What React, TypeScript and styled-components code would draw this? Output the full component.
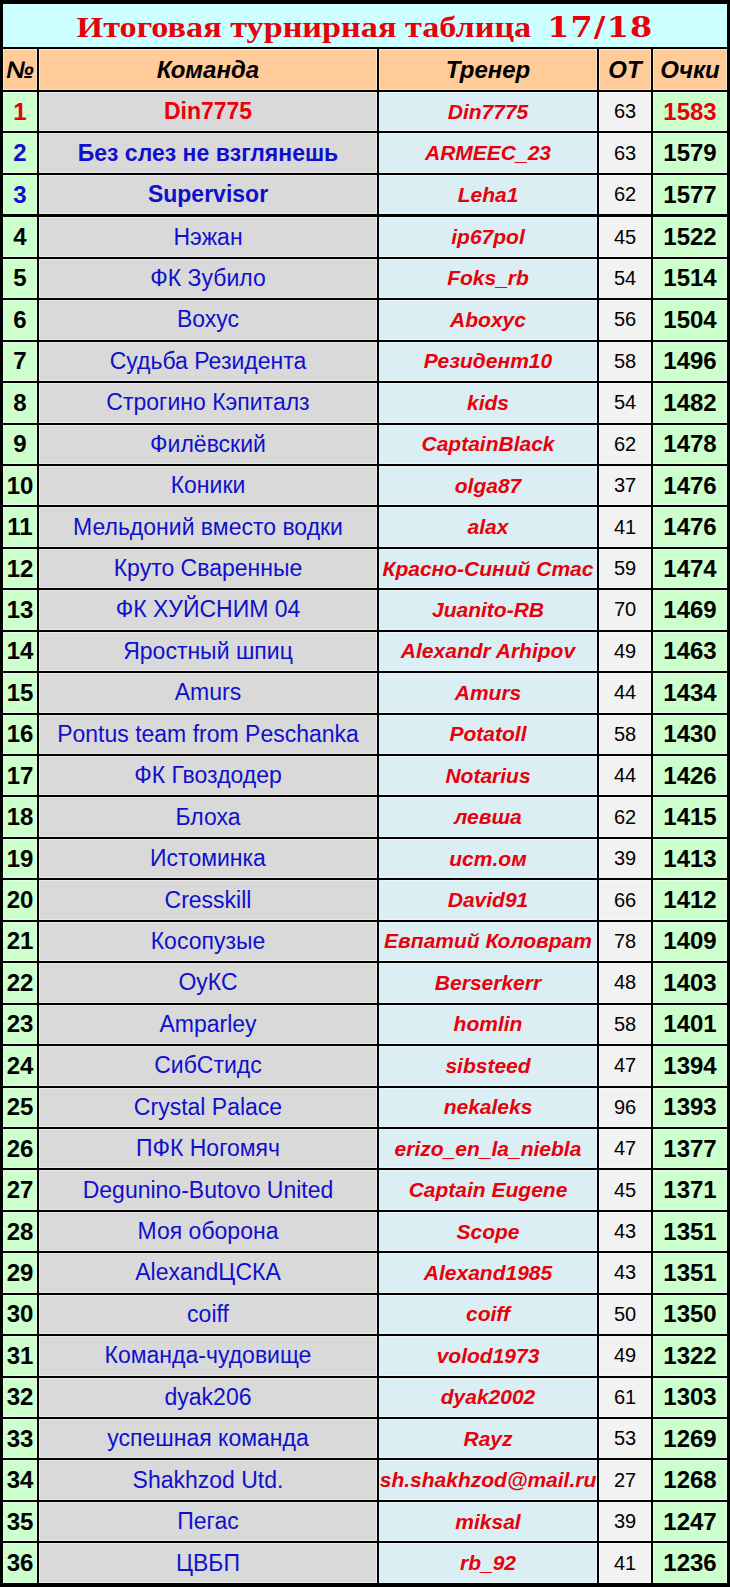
import React from 'react'
import styled, { createGlobalStyle } from 'styled-components'

const GlobalStyle = createGlobalStyle`
  html, body {
    margin: 0;
    padding: 0;
    background: #000;
  }
`

const RED = '#e8000a'
const BLUE = '#1010cc'
const COLS = '34px 338px 218px 52px 74px'

const Page = styled.div`
  width: 730px;
  height: 1587px;
  box-sizing: border-box;
  background: #000;
  padding: 4px 3px;
  display: flex;
  flex-direction: column;
  gap: 2px;
  font-family: "Liberation Sans", Arial, sans-serif;
`

const Title = styled.div`
  height: 43px;
  background: #ccffff;
  display: flex;
  align-items: center;
  justify-content: center;
  padding-top: 2px;
  box-sizing: border-box;
`

const TitleText = styled.span`
  display: inline-block;
  font-family: "Liberation Serif", "Times New Roman", serif;
  font-weight: bold;
  font-size: 30px;
  color: ${RED};
  transform: scaleX(1.14);
  white-space: nowrap;
`

const Season = styled.span`
  font-family: "DejaVu Serif", serif;
  font-weight: 900;
  font-size: 28px;
  margin-left: 14px;
  letter-spacing: 1px;
`

const Row = styled.div<{ $height: number; $gapTop?: number }>`
  display: grid;
  grid-template-columns: ${COLS};
  gap: 2px;
  height: ${({ $height }) => $height}px;
  margin-top: ${({ $gapTop }) => ($gapTop ? $gapTop + 'px' : '0')};
`

const Cell = styled.div<{ $bg: string }>`
  background: ${({ $bg }) => $bg};
  display: flex;
  align-items: center;
  justify-content: center;
  white-space: nowrap;
  overflow: hidden;
  box-shadow: inset 0 0 0 1px rgba(255, 255, 255, 0.45);
`

const HeadText = styled.span`
  font-weight: bold;
  font-style: italic;
  font-size: 24px;
  color: #000;
`

const Num = styled.span<{ $color: string }>`
  font-weight: bold;
  font-size: 24px;
  color: ${({ $color }) => $color};
`

const Team = styled.span<{ $color: string; $bold?: boolean }>`
  font-size: 23px;
  font-weight: ${({ $bold }) => ($bold ? 'bold' : 'normal')};
  color: ${({ $color }) => $color};
`

const Coach = styled.span`
  font-size: 21px;
  font-weight: bold;
  font-style: italic;
  color: ${RED};
`

const Games = styled.span`
  font-size: 20px;
  color: #000;
`

const Points = styled.span<{ $color: string }>`
  font-size: 24px;
  font-weight: bold;
  color: ${({ $color }) => $color};
`

type Entry = [string, string, number, number]

const data: Entry[] = [
  ['Din7775', 'Din7775', 63, 1583],
  ['Без слез не взглянешь', 'ARMEEC_23', 63, 1579],
  ['Supervisor', 'Leha1', 62, 1577],
  ['Нэжан', 'ip67pol', 45, 1522],
  ['ФК Зубило', 'Foks_rb', 54, 1514],
  ['Вохус', 'Aboxyc', 56, 1504],
  ['Судьба Резидента', 'Резидент10', 58, 1496],
  ['Строгино Кэпиталз', 'kids', 54, 1482],
  ['Филёвский', 'CaptainBlack', 62, 1478],
  ['Коники', 'olga87', 37, 1476],
  ['Мельдоний вместо водки', 'alax', 41, 1476],
  ['Круто Сваренные', 'Красно-Синий Стас', 59, 1474],
  ['ФК ХУЙСНИМ 04', 'Juanito-RB', 70, 1469],
  ['Яростный шпиц', 'Alexandr Arhipov', 49, 1463],
  ['Amurs', 'Amurs', 44, 1434],
  ['Pontus team from Peschanka', 'Potatoll', 58, 1430],
  ['ФК Гвоздодер', 'Notarius', 44, 1426],
  ['Блоха', 'левша', 62, 1415],
  ['Истоминка', 'ucm.ом', 39, 1413],
  ['Cresskill', 'David91', 66, 1412],
  ['Косопузые', 'Евпатий Коловрат', 78, 1409],
  ['ОуКС', 'Berserkerr', 48, 1403],
  ['Amparley', 'homlin', 58, 1401],
  ['СибСтидс', 'sibsteed', 47, 1394],
  ['Crystal Palace', 'nekaleks', 96, 1393],
  ['ПФК Ногомяч', 'erizo_en_la_niebla', 47, 1377],
  ['Degunino-Butovo United', 'Captain Eugene', 45, 1371],
  ['Моя оборона', 'Scope', 43, 1351],
  ['AlexandЦСКА', 'Alexand1985', 43, 1351],
  ['coiff', 'coiff', 50, 1350],
  ['Команда-чудовище', 'volod1973', 49, 1322],
  ['dyak206', 'dyak2002', 61, 1303],
  ['успешная команда', 'Rayz', 53, 1269],
  ['Shakhzod Utd.', 'sh.shakhzod@mail.ru', 27, 1268],
  ['Пегас', 'miksal', 39, 1247],
  ['ЦВБП', 'rb_92', 41, 1236],
]

const ROW_H = 39.44

export default function App() {
  return (
    <Page>
      <GlobalStyle />
      <Title>
        <TitleText>
          Итоговая турнирная таблица<Season>17/18</Season>
        </TitleText>
      </Title>
      <Row $height={41}>
        <Cell $bg="#ffcc99"><HeadText>№</HeadText></Cell>
        <Cell $bg="#ffcc99"><HeadText>Команда</HeadText></Cell>
        <Cell $bg="#ffcc99"><HeadText>Тренер</HeadText></Cell>
        <Cell $bg="#ffcc99"><HeadText>ОТ</HeadText></Cell>
        <Cell $bg="#ffcc99"><HeadText>Очки</HeadText></Cell>
      </Row>
      {data.map(([team, coach, games, points], i) => {
        const place = i + 1
        const teamColor = place === 1 ? RED : BLUE
        const numColor = place === 1 ? RED : place <= 3 ? BLUE : '#000'
        return (
          <Row key={place} $height={ROW_H} $gapTop={place === 4 ? 1 : 0}>
            <Cell $bg="#ccffcc"><Num $color={numColor}>{place}</Num></Cell>
            <Cell $bg="#d9d9d9">
              <Team $color={teamColor} $bold={place <= 3}>{team}</Team>
            </Cell>
            <Cell $bg="#daeef3"><Coach>{coach}</Coach></Cell>
            <Cell $bg="#f2f2f2"><Games>{games}</Games></Cell>
            <Cell $bg="#ccffcc">
              <Points $color={place === 1 ? RED : '#000'}>{points}</Points>
            </Cell>
          </Row>
        )
      })}
    </Page>
  )
}
